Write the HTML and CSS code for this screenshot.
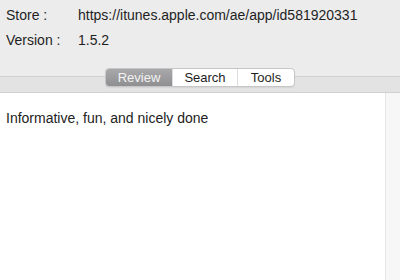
FILE: index.html
```html
<!DOCTYPE html>
<html lang="en">
<head>
    <meta charset="UTF-8">
    <title>App Info</title>
    <link rel="stylesheet" href="styles.css">
</head>
<body>
    <div class="info">
        <div class="info-row">
            <span class="info-label">Store :</span>
            <span class="info-value">https://itunes.apple.com/ae/app/id581920331</span>
        </div>
        <div class="info-row">
            <span class="info-label">Version :</span>
            <span class="info-value">1.5.2</span>
        </div>
    </div>

    <!-- tab bar -->
    <div class="tab-bar">
        <div class="segmented">
            <span class="seg seg-review active">Review</span>
            <span class="seg seg-search">Search</span>
            <span class="seg seg-tools">Tools</span>
        </div>
    </div>

    <div class="content">
        <div class="review-text">Informative, fun, and nicely done</div>
        <div class="scroll-track"></div>
    </div>
</body>
</html>
```

FILE: styles.css
```css
* {
    margin: 0;
    padding: 0;
    box-sizing: border-box;
}

html, body {
    height: 100%;
}

body {
    font-family: 'Liberation Sans', Arial, sans-serif;
    font-size: 14px;
    color: #1f1f1f;
    background: #ececec;
    display: flex;
    flex-direction: column;
}

.info {
    padding: 4px 0 0 6px;
    display: flex;
    flex-direction: column;
    gap: 3px;
}

.info-row {
    display: flex;
    height: 22px;
    align-items: center;
}

.info-label {
    width: 72px;
}

/* tab bar */
.tab-bar {
    margin-top: 17px;
    height: 25px;
    display: flex;
    justify-content: center;
    align-items: flex-start;
    background: linear-gradient(#ececec 0, #ececec 8px, #d0d0d0 8px, #d0d0d0 9px, #e3e3e3 9px);
    border-bottom: 1px solid #d0d0d0;
}

.segmented {
    display: flex;
    height: 19px;
    border: 1px solid #c6c6c6;
    border-radius: 4px;
    background: #ffffff;
    overflow: hidden;
    box-shadow: 0 1px 1px rgba(0,0,0,0.06);
    font-size: 13px;
}

.seg {
    display: flex;
    align-items: center;
    justify-content: center;
    color: #1e1e1e;
    border-left: 1px solid #dedede;
}

.seg-review {
    width: 66px;
    border-left: none;
}

.seg-search {
    width: 65px;
}

.seg-tools {
    width: 57px;
}

.seg.active {
    background: linear-gradient(#a9a9ab, #8f8f91);
    color: #f4f4f4;
}

.content {
    flex: 1;
    background: #ffffff;
    display: flex;
}

.review-text {
    flex: 1;
    padding: 17px 6px;
    color: #222;
}

.scroll-track {
    width: 15px;
    background: #f7f7f7;
    border-left: 1px solid #e6e6e6;
}
```
